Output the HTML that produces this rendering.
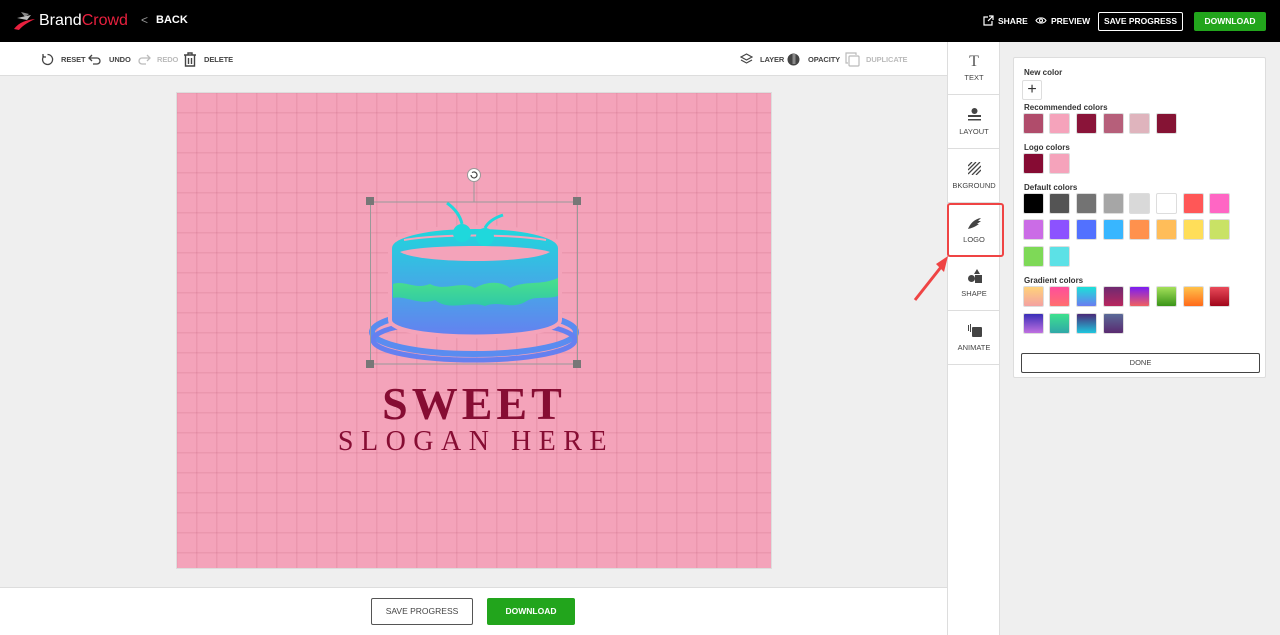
<!DOCTYPE html>
<html><head><meta charset="utf-8"><style>
*{margin:0;padding:0;box-sizing:border-box}
body{width:1280px;height:635px;overflow:hidden;font-family:"Liberation Sans",sans-serif;background:#efefef;position:relative}
.a{position:absolute}
.hdr{left:0;top:0;width:1280px;height:42px;background:#000}
.tb{left:0;top:42px;width:947px;height:34px;background:#fff;border-bottom:1px solid #ddd}
.t{font-size:7.5px;font-weight:bold;color:#444;position:absolute;top:13px;letter-spacing:-0.1px}
.bot{left:0;top:587px;width:947px;height:48px;background:#fff;border-top:1px solid #ddd}
.side{left:947px;top:42px;width:53px;height:593px;background:#fff;border-left:1px solid #ddd;border-right:1px solid #ddd}
.si{position:absolute;left:0;width:52px;height:53px;border-bottom:1px solid #ddd;text-align:center;font-size:7.5px;color:#444}
.si span{position:absolute;left:0;right:0;bottom:12px}
.card{left:1013px;top:57px;width:253px;height:321px;background:#fff;border:1px solid #ddd;border-radius:2px}
.lbl{position:absolute;left:10px;font-size:8px;font-weight:bold;color:#333}
.sw{position:absolute;width:21px;height:21px;border-radius:2px;border:1px solid #ddd}
.canvas{left:176px;top:92px;width:596px;height:477px;background-color:#f4a3ba;
background-image:linear-gradient(90deg,rgba(180,80,110,.15) 1.5px,transparent 1.5px),linear-gradient(rgba(180,80,110,.15) 1.5px,transparent 1.5px);
background-size:20px 20px;background-position:19px 19px;border:1px solid #ddd}
</style></head><body>
<div class="a hdr">
 <svg class="a" style="left:13px;top:10px" width="24" height="22" viewBox="0 0 24 22"><path d="M8 2 L16 4 L12 7 Z" fill="#888"/><path d="M4 8 L18 5 L14 10 Z" fill="#bbb"/><path d="M1 19 C6 12 14 10 22 9 C16 12 10 15 6 20 Z" fill="#e8203e"/></svg>
 <div class="a" style="left:39px;top:12px;font-size:16px;color:#fff">Brand<span style="color:#e8203e">Crowd</span></div>
 <div class="a" style="left:141px;top:13px;font-size:12px;color:#999">&lt;</div>
 <div class="a" style="left:156px;top:14px;font-size:11px;font-weight:bold;color:#fff">BACK</div>
 <svg class="a" style="left:983px;top:15px" width="11" height="11" viewBox="0 0 11 11" fill="none" stroke="#fff" stroke-width="1.2"><path d="M5 2H1v8h8V6M6 1h4v4M10 1L5 6"/></svg>
 <div class="a" style="left:998px;top:16px;font-size:8.5px;font-weight:bold;color:#fff">SHARE</div>
 <svg class="a" style="left:1035px;top:16px" width="12" height="9" viewBox="0 0 12 9" fill="none" stroke="#fff" stroke-width="1.1"><path d="M1 4.5C3 1 9 1 11 4.5C9 8 3 8 1 4.5Z"/><circle cx="6" cy="4.5" r="1.5"/></svg>
 <div class="a" style="left:1051px;top:16px;font-size:8.5px;font-weight:bold;color:#fff">PREVIEW</div>
 <div class="a" style="left:1098px;top:12px;width:85px;height:19px;border:1px solid #fff;border-radius:2px;color:#fff;font-size:8.5px;font-weight:bold;text-align:center;line-height:17px">SAVE PROGRESS</div>
 <div class="a" style="left:1194px;top:12px;width:72px;height:19px;background:#22a51c;border-radius:2px;color:#fff;font-size:8.5px;font-weight:bold;text-align:center;line-height:19px">DOWNLOAD</div>
</div>
<div class="a tb">
 <svg class="a" style="left:41px;top:11px" width="13" height="13" viewBox="0 0 13 13" fill="none" stroke="#444" stroke-width="1.3"><path d="M3 3A5 5 0 1 0 6.5 1.5M2 1v3h3"/></svg>
 <div class="t" style="left:61px">RESET</div>
 <svg class="a" style="left:88px;top:12px" width="14" height="11" viewBox="0 0 14 11" fill="none" stroke="#444" stroke-width="1.3"><path d="M4 1L1 4l3 3M1 4h8a3 3 0 0 1 0 6H5"/></svg>
 <div class="t" style="left:109px">UNDO</div>
 <svg class="a" style="left:137px;top:12px" width="14" height="11" viewBox="0 0 14 11" fill="none" stroke="#bbb" stroke-width="1.3"><path d="M10 1l3 3-3 3M13 4H5a3 3 0 0 0 0 6h4"/></svg>
 <div class="t" style="left:157px;color:#bbb">REDO</div>
 <svg class="a" style="left:183px;top:10px" width="14" height="15" viewBox="0 0 14 15" fill="none" stroke="#444" stroke-width="1.4"><path d="M1 3h12M5 3V1h4v2M2.5 3v11h9V3M5.5 6v6M8.5 6v6"/></svg>
 <div class="t" style="left:204px">DELETE</div>
 <svg class="a" style="left:740px;top:11px" width="13" height="13" viewBox="0 0 13 13" fill="none" stroke="#444" stroke-width="1.2"><path d="M6.5 1L12 4 6.5 7 1 4Z M1 7l5.5 3L12 7"/></svg>
 <div class="t" style="left:760px">LAYER</div>
 <svg class="a" style="left:787px;top:11px" width="13" height="13" viewBox="0 0 13 13"><circle cx="6.5" cy="6.5" r="6" fill="#444"/><path d="M7 1.5v10" stroke="#ccc" stroke-width="3" stroke-dasharray="1 1"/></svg>
 <div class="t" style="left:808px">OPACITY</div>
 <svg class="a" style="left:845px;top:10px" width="15" height="15" viewBox="0 0 15 15" fill="none" stroke="#bbb" stroke-width="1.2"><path d="M3 11H1V1h10v2"/><rect x="4" y="4" width="10" height="10" rx="1"/></svg>
 <div class="t" style="left:866px;color:#bbb">DUPLICATE</div>
</div>
<div class="a canvas"></div>
<svg class="a" style="left:360px;top:160px" width="260" height="300" viewBox="0 0 260 300">
 <defs><linearGradient id="g" x1="0" y1="0" x2="0" y2="1"><stop offset="0" stop-color="#1fd8dc"/><stop offset="1" stop-color="#6580f0"/></linearGradient>
 <linearGradient id="gg" x1="0" y1="0" x2="0" y2="1"><stop offset="0" stop-color="#4be08a"/><stop offset="1" stop-color="#30c9a8"/></linearGradient></defs>
 <ellipse cx="114" cy="172" rx="102" ry="22" fill="none" stroke="#5a8cf0" stroke-width="6"/>
 <ellipse cx="114" cy="180" rx="101" ry="20" fill="none" stroke="#6580f0" stroke-width="5"/>
 <path d="M30 88 C30 60 200 60 200 88 L200 160 C200 182 30 182 30 160 Z" fill="url(#g)" stroke="#f4a3ba" stroke-width="4"/>
 <path d="M40 92 C60 84 170 84 190 92 C170 104 60 104 40 92Z" fill="#f4a3ba"/>
 <path d="M44 80 C80 74 150 74 186 80" stroke="#f4a3ba" stroke-width="2" fill="none"/>
 <path d="M33 124 C45 120 55 130 70 124 C85 132 100 120 115 128 C125 122 140 120 150 128 C165 120 180 126 198 118 L198 136 C185 140 175 135 165 142 C150 150 140 140 125 146 C110 140 90 152 75 140 C60 146 45 135 33 138Z" fill="url(#gg)"/>
 <circle cx="102" cy="73" r="9" fill="#1fd8dc"/><circle cx="125" cy="77" r="9" fill="#1fd8dc"/>
 <path d="M102 64 C100 55 94 48 87 43 M125 68 C128 62 134 58 143 55" stroke="#1fd8dc" stroke-width="3" fill="none"/>
 <rect x="10.5" y="42" width="207" height="162" fill="none" stroke="#999" stroke-width="1"/>
 <line x1="114" y1="22" x2="114" y2="42" stroke="#999"/>
 <circle cx="114" cy="15" r="6.5" fill="#fff" stroke="#999"/><path d="M111 15a3 3 0 1 0 1-2.3" stroke="#444" fill="none" stroke-width="1.2"/>
 <rect x="6" y="37" width="8" height="8" fill="#777"/><rect x="213" y="37" width="8" height="8" fill="#777"/><rect x="6" y="200" width="8" height="8" fill="#777"/><rect x="213" y="200" width="8" height="8" fill="#777"/>
</svg>
<div class="a" style="left:366px;top:377px;width:216px;text-align:center;font-family:'Liberation Serif',serif;font-weight:bold;font-size:46px;color:#860d33;letter-spacing:4px">SWEET</div>
<div class="a" style="left:316px;top:426px;width:320px;text-align:center;font-family:'Liberation Serif',serif;font-size:28px;color:#860d33;letter-spacing:7.5px">SLOGAN HERE</div>
<div class="a bot">
 <div class="a" style="left:371px;top:10px;width:102px;height:27px;border:1.5px solid #555;border-radius:2px;font-size:8.5px;color:#444;text-align:center;line-height:24px">SAVE PROGRESS</div>
 <div class="a" style="left:487px;top:10px;width:88px;height:27px;background:#22a51c;border-radius:2px;font-size:8.5px;font-weight:bold;color:#fff;text-align:center;line-height:27px">DOWNLOAD</div>
</div>
<div class="a side">
 <div class="si" style="top:0"><div style="position:absolute;top:11px;left:0;right:0;font-family:'Liberation Serif',serif;font-size:16px;color:#555">T</div><span>TEXT</span></div>
 <div class="si" style="top:54px"><svg style="position:absolute;left:20px;top:12px" width="13" height="13" viewBox="0 0 13 13" fill="#444"><circle cx="6.5" cy="3" r="3"/><rect x="0" y="7" width="13" height="2"/><rect x="0" y="11" width="13" height="1.5"/></svg><span>LAYOUT</span></div>
 <div class="si" style="top:108px"><svg style="position:absolute;left:20px;top:12px" width="13" height="13" viewBox="0 0 13 13" stroke="#444" stroke-width="1.3"><path d="M0 4L4 0M0 8L8 0M0 12L12 0M4 13L13 4M8 13L13 8"/></svg><span>BKGROUND</span></div>
 <div class="si" style="top:162px"><svg style="position:absolute;left:19px;top:12px" width="15" height="14" viewBox="0 0 15 14" fill="#444"><path d="M1 13C3 8 7 3 14 2L11 5 14 5 10 8 12 8C8 11 5 12 1 13Z"/></svg><span>LOGO</span></div>
 <div class="si" style="top:216px"><svg style="position:absolute;left:20px;top:11px" width="14" height="14" viewBox="0 0 14 14" fill="#444"><path d="M9 0L12 5H6Z"/><circle cx="3.5" cy="9.5" r="3.5"/><rect x="7" y="6" width="7" height="8"/></svg><span>SHAPE</span></div>
 <div class="si" style="top:270px"><svg style="position:absolute;left:20px;top:11px" width="14" height="14" viewBox="0 0 14 14" fill="#444"><path d="M0 2h1v6H0ZM2 1h1v8H2Z"/><rect x="4" y="4" width="10" height="10" rx="1"/></svg><span>ANIMATE</span></div>
</div>
<div class="a" style="left:947px;top:203px;width:57px;height:54px;border:2px solid #ef4444;border-radius:3px"></div>
<svg class="a" style="left:910px;top:250px" width="45" height="55" viewBox="0 0 45 55"><path d="M5 50L35 12" stroke="#ef4444" stroke-width="3"/><path d="M38 6L26 14 34 22Z" fill="#ef4444"/></svg>
<div class="a card">
 <div class="lbl" style="top:10px">New color</div>
 <div class="a" style="left:8px;top:22px;width:20px;height:20px;border:1px solid #ddd;border-radius:2px;text-align:center;font-size:16px;line-height:18px;color:#333">+</div>
 <div class="lbl" style="top:45px">Recommended colors</div>
 <div class="lbl" style="top:85px">Logo colors</div>
 <div class="lbl" style="top:125px">Default colors</div>
 <div class="lbl" style="top:218px">Gradient colors</div>
 <div class="a" style="left:7px;top:295px;width:239px;height:20px;border:1.5px solid #444;border-radius:2px;font-size:7.5px;color:#444;text-align:center;line-height:17px">DONE</div>
</div>
<div class="a" style="left:1013px;top:57px">
<div class="sw" style="left:10px;top:56px;background:#b04c6b"></div><div class="sw" style="left:36px;top:56px;background:#f5a3bb"></div><div class="sw" style="left:63px;top:56px;background:#8a1439"></div><div class="sw" style="left:90px;top:56px;background:#b65f7a"></div><div class="sw" style="left:116px;top:56px;background:#dfb4bd"></div><div class="sw" style="left:143px;top:56px;background:#851334"></div>
<div class="sw" style="left:10px;top:96px;background:#860b33"></div><div class="sw" style="left:36px;top:96px;background:#f5a3bb"></div>
<div class="sw" style="left:10px;top:136px;background:#000"></div><div class="sw" style="left:36px;top:136px;background:#545454"></div><div class="sw" style="left:63px;top:136px;background:#737373"></div><div class="sw" style="left:90px;top:136px;background:#a6a6a6"></div><div class="sw" style="left:116px;top:136px;background:#d9d9d9"></div><div class="sw" style="left:143px;top:136px;background:#fff"></div><div class="sw" style="left:170px;top:136px;background:#ff5757"></div><div class="sw" style="left:196px;top:136px;background:#ff66c4"></div>
<div class="sw" style="left:10px;top:162px;background:#cb6ce6"></div><div class="sw" style="left:36px;top:162px;background:#8c52ff"></div><div class="sw" style="left:63px;top:162px;background:#5271ff"></div><div class="sw" style="left:90px;top:162px;background:#38b6ff"></div><div class="sw" style="left:116px;top:162px;background:#ff914d"></div><div class="sw" style="left:143px;top:162px;background:#ffbd59"></div><div class="sw" style="left:170px;top:162px;background:#ffde59"></div><div class="sw" style="left:196px;top:162px;background:#c9e265"></div>
<div class="sw" style="left:10px;top:189px;background:#7ed957"></div><div class="sw" style="left:36px;top:189px;background:#5ce1e6"></div>
<div class="sw" style="left:10px;top:229px;background:linear-gradient(#ffd27a,#f4a1a1)"></div><div class="sw" style="left:36px;top:229px;background:linear-gradient(#ff4e9b,#ff6f6f)"></div><div class="sw" style="left:63px;top:229px;background:linear-gradient(#1ce1d8,#6a7cf0)"></div><div class="sw" style="left:90px;top:229px;background:linear-gradient(#6f2a72,#b8275e)"></div><div class="sw" style="left:116px;top:229px;background:linear-gradient(#7b1df2,#f06060)"></div><div class="sw" style="left:143px;top:229px;background:linear-gradient(#a4e05a,#3a9418)"></div><div class="sw" style="left:170px;top:229px;background:linear-gradient(#ffc24a,#ff6a1a)"></div><div class="sw" style="left:196px;top:229px;background:linear-gradient(#ea4a5a,#a0061a)"></div>
<div class="sw" style="left:10px;top:256px;background:linear-gradient(#3a2fb8,#c070e0)"></div><div class="sw" style="left:36px;top:256px;background:linear-gradient(#3ee08e,#30a8a8)"></div><div class="sw" style="left:63px;top:256px;background:linear-gradient(#4a2a78,#1ec6de)"></div><div class="sw" style="left:90px;top:256px;background:linear-gradient(#5a6a98,#5a2a70)"></div>
</div>
</body></html>
